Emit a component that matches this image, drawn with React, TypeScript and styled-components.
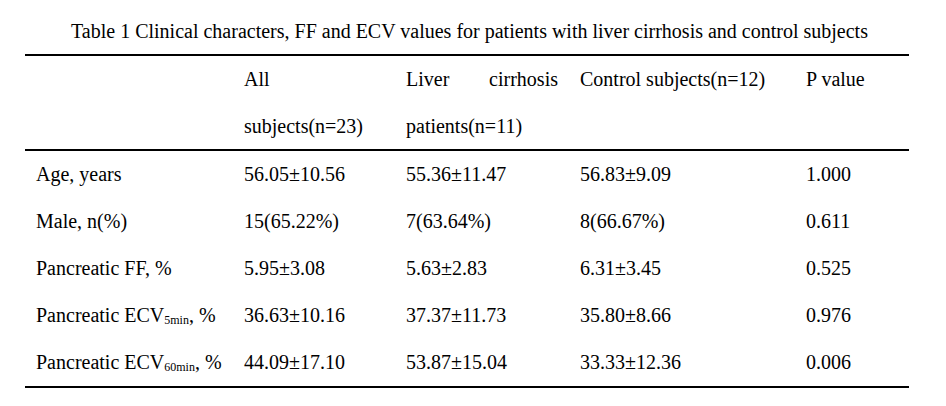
import styled, { createGlobalStyle } from "styled-components"

const GlobalStyle = createGlobalStyle`
  html, body {
    margin: 0;
    padding: 0;
    background: #fff;
  }
  body {
    font-family: "Liberation Serif", "Times New Roman", serif;
    color: #000;
  }
`

const Page = styled.div`
  width: 946px;
  padding-top: 19px;
`

const Caption = styled.div`
  font-size: 20px;
  line-height: 24px;
  text-align: center;
  margin-bottom: 11px;
  padding-right: 7px;
`

const Table = styled.table`
  margin-left: 25px;
  width: 884px;
  table-layout: fixed;
  border-collapse: collapse;
  border-top: 2px solid #000;
  border-bottom: 2px solid #000;
  font-size: 20px;
`

const Head = styled.thead`
  border-bottom: 2px solid #000;
`

const HeadCell = styled.th`
  padding: 0 11px;
  font-weight: normal;
  text-align: left;
  vertical-align: top;
  line-height: 46.5px;
`

const HeadLine = styled.div<{ $spread?: boolean }>`
  display: flex;
  justify-content: ${(p) => (p.$spread ? "space-between" : "flex-start")};
  white-space: nowrap;
`

const Cell = styled.td`
  padding: 0 11px;
  line-height: 47px;
  white-space: nowrap;
`

const Sub = styled.span`
  font-size: 12px;
  line-height: 0;
  position: relative;
  top: 2px;
`

type Row = {
  label: React.ReactNode
  values: string[]
}

const rows: Row[] = [
  { label: "Age, years", values: ["56.05±10.56", "55.36±11.47", "56.83±9.09", "1.000"] },
  { label: "Male, n(%)", values: ["15(65.22%)", "7(63.64%)", "8(66.67%)", "0.611"] },
  { label: "Pancreatic FF, %", values: ["5.95±3.08", "5.63±2.83", "6.31±3.45", "0.525"] },
  {
    label: (
      <>
        Pancreatic ECV<Sub>5min</Sub>, %
      </>
    ),
    values: ["36.63±10.16", "37.37±11.73", "35.80±8.66", "0.976"],
  },
  {
    label: (
      <>
        Pancreatic ECV<Sub>60min</Sub>, %
      </>
    ),
    values: ["44.09±17.10", "53.87±15.04", "33.33±12.36", "0.006"],
  },
]

export default function App() {
  return (
    <Page>
      <GlobalStyle />
      <Caption>
        Table 1 Clinical characters, FF and ECV values for patients with liver cirrhosis and control subjects
      </Caption>
      <Table>
        <colgroup>
          <col style={{ width: 208 }} />
          <col style={{ width: 162 }} />
          <col style={{ width: 174 }} />
          <col style={{ width: 226 }} />
          <col style={{ width: 114 }} />
        </colgroup>
        <Head>
          <tr>
            <HeadCell />
            <HeadCell>
              <HeadLine>All</HeadLine>
              <HeadLine>subjects(n=23)</HeadLine>
            </HeadCell>
            <HeadCell>
              <HeadLine $spread>
                <span>Liver</span>
                <span>cirrhosis</span>
              </HeadLine>
              <HeadLine>patients(n=11)</HeadLine>
            </HeadCell>
            <HeadCell>
              <HeadLine>Control subjects(n=12)</HeadLine>
            </HeadCell>
            <HeadCell>
              <HeadLine>P value</HeadLine>
            </HeadCell>
          </tr>
        </Head>
        <tbody>
          {rows.map((row, i) => (
            <tr key={i}>
              <Cell>{row.label}</Cell>
              {row.values.map((v, j) => (
                <Cell key={j}>{v}</Cell>
              ))}
            </tr>
          ))}
        </tbody>
      </Table>
    </Page>
  )
}
